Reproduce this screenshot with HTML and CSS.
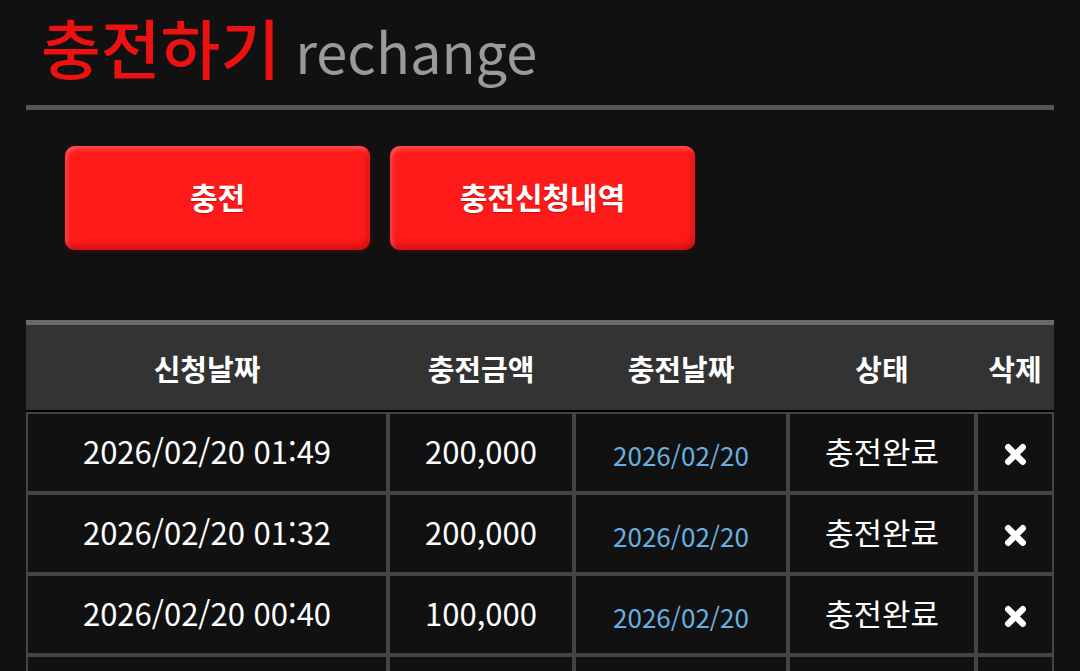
FILE: index.html
```html
<!DOCTYPE html>
<html lang="ko">
<head>
<meta charset="utf-8">
<title>충전하기</title>
<link rel="stylesheet" href="styles.css">
</head>
<body>
<div class="page">
  <header class="head">
    <h1 class="title"><span class="title-ko">충전하기</span><span class="title-en">rechange</span></h1>
  </header>
  <div class="btns">
    <a class="btn">충전</a>
    <a class="btn">충전신청내역</a>
  </div>
  <table class="list">
    <colgroup>
      <col class="c1"><col class="c2"><col class="c3"><col class="c4"><col class="c5">
    </colgroup>
    <thead>
      <tr><th>신청날짜</th><th>충전금액</th><th>충전날짜</th><th>상태</th><th>삭제</th></tr>
    </thead>
    <tbody>
      <tr><td>2026/02/20 01:49</td><td>200,000</td><td class="blue">2026/02/20</td><td>충전완료</td><td><svg class="x" viewBox="0 0 22 22"><path d="M4 4L18 18M18 4L4 18"/></svg></td></tr>
      <tr><td>2026/02/20 01:32</td><td>200,000</td><td class="blue">2026/02/20</td><td>충전완료</td><td><svg class="x" viewBox="0 0 22 22"><path d="M4 4L18 18M18 4L4 18"/></svg></td></tr>
      <tr><td>2026/02/20 00:40</td><td>100,000</td><td class="blue">2026/02/20</td><td>충전완료</td><td><svg class="x" viewBox="0 0 22 22"><path d="M4 4L18 18M18 4L4 18"/></svg></td></tr>
      <tr><td></td><td></td><td class="blue"></td><td></td><td></td></tr>
    </tbody>
  </table>
</div>
</body>
</html>
```

FILE: styles.css
```css
html, body {
  margin: 0;
  padding: 0;
  background: #111111;
  height: 100%;
  overflow: hidden;
}
body {
  font-family: "Noto Sans CJK KR", "Noto Sans", sans-serif;
  color: #fff;
  font-feature-settings: "calt" 0, "case" 0;
}
.page {
  padding: 0 26px;
}
.head {
  border-bottom: 5px solid #555555;
  height: 110px;
  box-sizing: border-box;
  padding-top: 4px;
}
.title {
  margin: 0 0 0 15px;
  font-weight: 400;
  line-height: 84px;
  letter-spacing: 0;
  white-space: nowrap;
}
.title-ko {
  color: #ee1111;
  font-size: 65px;
  font-weight: 500;
}
.title-en {
  color: #9a9a9a;
  font-size: 56px;
  margin-left: 15px;
}
.btns {
  display: flex;
  gap: 20px;
  margin: 36px 0 0 39px;
}
.btn {
  display: flex;
  align-items: center;
  justify-content: center;
  width: 305px;
  height: 104px;
  border-radius: 10px;
  background: #ff1a1a;
  color: #fff;
  font-size: 30px;
  font-weight: 700;
  box-shadow: inset 2px 3px 5px rgba(255, 160, 160, 0.45), inset -2px -4px 6px rgba(140, 0, 0, 0.45), 0 1px 4px rgba(255, 0, 0, 0.25);
  text-shadow: 0 1px 1px rgba(120, 0, 0, 0.5);
  padding-bottom: 4px;
  box-sizing: border-box;
}
.list {
  margin-top: 70px;
  width: 1028px;
  table-layout: fixed;
  border-collapse: separate;
  border-spacing: 0;
}
.c1 { width: 362px; }
.c2 { width: 186px; }
.c3 { width: 214px; }
.c4 { width: 188px; }
.c5 { width: 78px; }
.list th {
  background: #333333;
  border-top: 5px solid #6a6a6a;
  border-bottom: 2px solid #000;
  height: 92px;
  box-sizing: border-box;
  padding: 0;
  font-size: 29px;
  font-weight: 700;
  color: #fff;
  white-space: nowrap;
}
.list td {
  border: 2px solid #444444;
  height: 81px;
  box-sizing: border-box;
  padding: 0 0 4px;
  text-align: center;
  font-size: 31px;
  color: #fff;
  white-space: nowrap;
}
.list td.blue {
  color: #68b0e0;
  font-size: 26px;
  padding-top: 4px;
  padding-bottom: 0;
}
.x {
  width: 23px;
  height: 23px;
  display: block;
  margin: 8px auto 0;
  fill: none;
  stroke: #fff;
  stroke-width: 6;
  stroke-linecap: round;
}
```
